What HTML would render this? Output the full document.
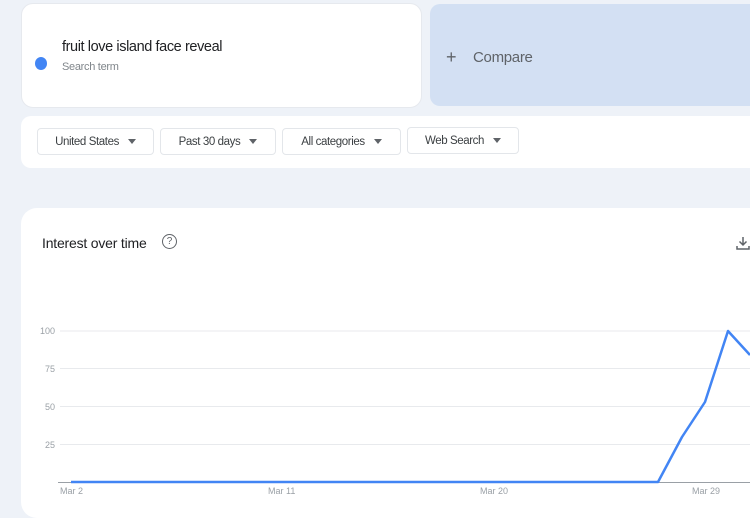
<!DOCTYPE html>
<html><head><meta charset="utf-8"><style>
body{margin:0;width:750px;height:500px;overflow:hidden;background:#eef2f8;font-family:"Liberation Sans",sans-serif;position:relative}
.a{position:absolute}
.chip{position:absolute;top:128px;height:27px;border:1px solid #e3e6ea;border-radius:4px;background:#fff;font-size:11.5px;letter-spacing:-0.4px;color:#3c4043;line-height:27px;text-align:center;box-sizing:border-box}
.tri{display:inline-block;width:0;height:0;border-left:4px solid transparent;border-right:4px solid transparent;border-top:5px solid #5f6368;margin-left:9px;vertical-align:middle}
</style></head><body>
<div class="a" style="left:21px;top:3px;width:401px;height:105px;background:#fff;border-radius:12px;border:1px solid #e6e9ee;box-sizing:border-box"></div>
<div class="a" style="left:35px;top:57px;width:12px;height:13px;border-radius:50%;background:#4285f4"></div>
<div class="a" style="left:62px;top:39px;font-size:14.5px;letter-spacing:-0.4px;color:#202124">fruit love island face reveal</div>
<div class="a" style="left:62px;top:61px;font-size:11px;letter-spacing:-0.3px;color:#80868b">Search term</div>
<div class="a" style="left:430px;top:4px;width:330px;height:102px;background:#d3e0f3;border-radius:10px"></div>
<div class="a" style="left:446px;top:47px;font-size:18px;color:#5f6368;font-weight:300">+</div>
<div class="a" style="left:473px;top:49px;font-size:15px;letter-spacing:-0.3px;color:#5f6368">Compare</div>
<div class="a" style="left:21px;top:116px;width:740px;height:52px;background:#fff;border-radius:10px"></div>
<div class="chip" style="left:37px;width:117px">United States<span class="tri"></span></div>
<div class="chip" style="left:160px;width:116px">Past 30 days<span class="tri"></span></div>
<div class="chip" style="left:282px;width:119px">All categories<span class="tri"></span></div>
<div class="chip" style="left:407px;width:112px;top:127px">Web Search<span class="tri"></span></div>
<div class="a" style="left:21px;top:208px;width:750px;height:310px;background:#fff;border-radius:16px"></div>
<div class="a" style="left:42px;top:235px;font-size:14px;letter-spacing:-0.2px;color:#202124">Interest over time</div>
<div class="a" style="left:162px;top:234px;width:13px;height:13px;border:1.3px solid #5f6368;border-radius:50%;font-size:10px;line-height:13px;text-align:center;color:#5f6368">?</div>
<svg class="a" style="left:0;top:0" width="750" height="500">
<path d="M743 237v8M739.5 241.5l3.5 3.5 3.5-3.5M737 246v3h12v-3" stroke="#5f6368" stroke-width="1.5" fill="none"/>
<g stroke="#e8eaed" stroke-width="1"><line x1="60" y1="331" x2="750" y2="331"/><line x1="60" y1="368.5" x2="750" y2="368.5"/><line x1="60" y1="406.5" x2="750" y2="406.5"/><line x1="60" y1="444.5" x2="750" y2="444.5"/></g>
<line x1="58" y1="482.5" x2="750" y2="482.5" stroke="#9aa0a6"/>
<g font-size="9" fill="#9aa0a6" font-family="Liberation Sans,sans-serif" text-anchor="end"><text x="55" y="334">100</text><text x="55" y="372">75</text><text x="55" y="410">50</text><text x="55" y="448">25</text></g>
<g font-size="9" fill="#9aa0a6" font-family="Liberation Sans,sans-serif"><text x="60" y="494">Mar 2</text><text x="268" y="494">Mar 11</text><text x="480" y="494">Mar 20</text><text x="692" y="494">Mar 29</text></g>
<polyline points="71,482 658,482 682,437 705,402 728,331 750,355" fill="none" stroke="#4285f4" stroke-width="2.5" stroke-linejoin="round"/>
</svg>
</body></html>
